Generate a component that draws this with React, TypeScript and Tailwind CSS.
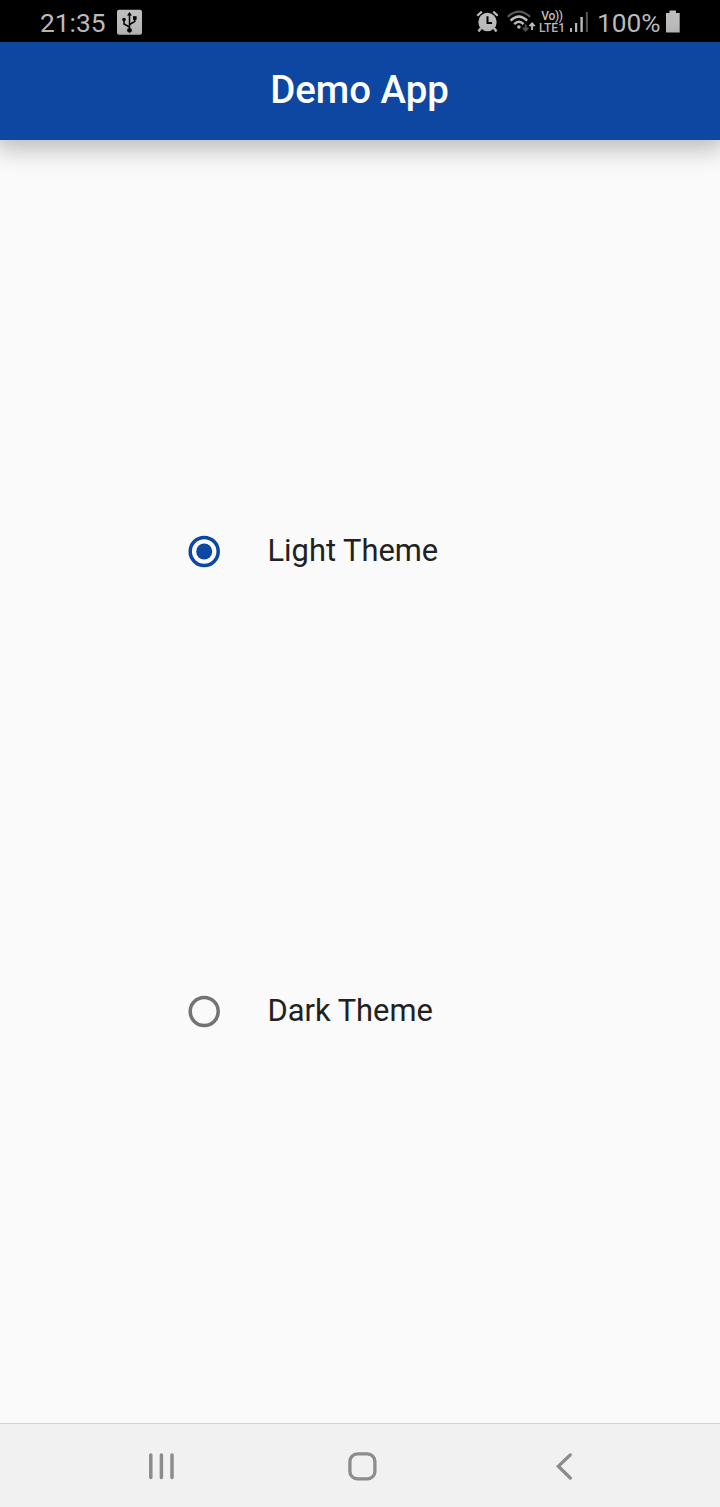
import React from "react";

function UsbIcon() {
  return (
    <svg className="mb-[2px] ml-[11px] h-[26px] w-[25px] shrink-0" viewBox="0 0 25 26" fill="none">
      <rect width="25" height="25" y="0.8" rx="2" fill="#bebebe" />
      <g stroke="#000" strokeWidth="1.5">
        <path d="M12.5 21V5.5" />
        <path d="M12.5 18L7 15V11.5M12.5 15.5L17.8 12.5V9.5" />
      </g>
      <path d="M12.5 3L15 6.6H10Z" fill="#000" />
      <circle cx="12.5" cy="21.3" r="2.4" fill="#000" />
      <circle cx="7" cy="10.6" r="1.8" fill="#000" />
      <rect x="16" y="7.2" width="3.6" height="3.6" fill="#000" />
    </svg>
  );
}

function AlarmIcon() {
  return (
    <svg className="mb-[2px] h-[24px] w-[24px] shrink-0" viewBox="-0.5 0 24 24" fill="none" stroke="#bebebe">
      <circle cx="12" cy="12" r="9.2" fill="#bebebe" stroke="none" />
      <path d="M1.8 5.8L6.3 1.6M22.2 5.8L17.7 1.6" strokeWidth="2.2" />
      <path d="M5.5 18L3 21.5M18.5 18L21 21.5" strokeWidth="2.4" />
      <path d="M12 6.3V12.9H16.6" stroke="#000" strokeWidth="2" />
    </svg>
  );
}

function WifiIcon() {
  return (
    <svg className="mb-[2px] ml-[7px] h-[24px] w-[30px] shrink-0" viewBox="-0.6 0 30 24" fill="none">
      <path d="M1 6.9Q12.3 -3.6 23.6 6.9" stroke="#585858" strokeWidth="2.2" />
      <path d="M4 10.7Q12.3 2.5 20.6 10.7" stroke="#bebebe" strokeWidth="2.4" />
      <path d="M7.6 14.1Q12.3 9.3 17 14.1" stroke="#bebebe" strokeWidth="2.4" />
      <circle cx="12.3" cy="17" r="1.8" fill="#bebebe" />
      <path d="M19 14.5V20M16.4 17.8L19 20.6L21.6 17.8" stroke="#585858" strokeWidth="1.8" />
      <path d="M25.5 20V14M22.9 16.2L25.5 13.4L28.1 16.2" stroke="#bebebe" strokeWidth="1.9" />
    </svg>
  );
}

function SignalIcon() {
  return (
    <svg className="mb-[2px] ml-[5px] h-[24px] w-[19px] shrink-0" viewBox="0 0 19 24">
      <rect x="0" y="18" width="2" height="4" fill="#bebebe" />
      <rect x="5" y="13" width="2.2" height="9" fill="#bebebe" />
      <rect x="10.4" y="7" width="2.4" height="15" fill="#bebebe" />
      <rect x="15.8" y="2" width="2.2" height="20" fill="#505050" />
    </svg>
  );
}

function StatusBar() {
  return (
    <header className="flex h-[42px] items-center bg-black pl-[40px] pr-[40px] pt-[3px] text-[26.3px] leading-[40px] text-[#bebebe]">
      <span className="w-[66px] shrink-0">21:35</span>
      <UsbIcon />
      <div className="ml-auto flex items-center">
        <AlarmIcon />
        <WifiIcon />
        <div className="ml-[3px] mb-[1px] flex w-[26px] flex-col items-center text-[12px] font-medium leading-[12px]">
          <span className="tracking-[-0.3px]">Vo))</span>
          <span>LTE1</span>
        </div>
        <SignalIcon />
        <span className="ml-[8px] w-[66px]">100%</span>
        <svg className="mb-[2px] ml-[2px] h-[24px] w-[15px] shrink-0" viewBox="0 0 15 24" fill="#bebebe">
          <path d="M4.5 0.5H11V3H14.7V22.5H1V3H4.5Z" />
        </svg>
      </div>
    </header>
  );
}

function ThemeOption({ label, selected }: { label: string; selected?: boolean }) {
  const color = selected ? "#0d47a1" : "#737373";
  return (
    <label className="flex items-center">
      <svg className="h-[34px] w-[34px] shrink-0" viewBox="0 0 34 34" fill="none">
        <circle cx="17.2" cy="17.5" r="14" stroke={color} strokeWidth="3.5" />
        {selected && <circle cx="17.2" cy="17.5" r="8" fill={color} />}
      </svg>
      <span className="ml-[46.5px] whitespace-nowrap text-[30.85px] leading-[34px] text-[#212121]">{label}</span>
    </label>
  );
}

function NavigationBar() {
  return (
    <nav className="flex h-[84px] items-center border-t border-[#d2d2d2] bg-[#f1f1f1] pl-[147px] pt-[1px]">
      <svg className="h-[30px] w-[29px]" viewBox="0 0 29 30" fill="none" stroke="#8c8c8c" strokeWidth="3.5" strokeLinecap="round">
        <path d="M3.8 4V26.5M14.4 4V26.5M25 4V26.5" />
      </svg>
      <svg className="ml-[171px] h-[30px] w-[30px]" viewBox="0 0 30 30" fill="none" stroke="#8c8c8c" strokeWidth="3.3">
        <rect x="2.9" y="2.9" width="25" height="25" rx="7.5" />
      </svg>
      <svg className="ml-[178px] h-[30px] w-[20px]" viewBox="0 0 20 30" fill="none" stroke="#8c8c8c" strokeWidth="3.3" strokeLinecap="round">
        <path d="M15.3 3.9L3.3 15.3L15.3 27" />
      </svg>
    </nav>
  );
}

export default function App() {
  return (
    <div className="flex h-[1507px] w-[720px] flex-col overflow-hidden bg-[#fafafa] font-[Roboto,sans-serif]">
      <StatusBar />
      <div className="z-10 flex h-[98px] shrink-0 items-center justify-center bg-[#0d47a1] pb-[2px] pr-[1px] shadow-[0_4px_24px_4px_rgba(0,0,0,0.28)]">
        <h1 className="text-[38.4px] font-medium leading-[44px] text-white">Demo App</h1>
      </div>
      <main className="flex flex-1 flex-col gap-[426px] pl-[187px] pt-[394px]">
        <ThemeOption label="Light Theme" selected />
        <ThemeOption label="Dark Theme" />
      </main>
      <NavigationBar />
    </div>
  );
}
